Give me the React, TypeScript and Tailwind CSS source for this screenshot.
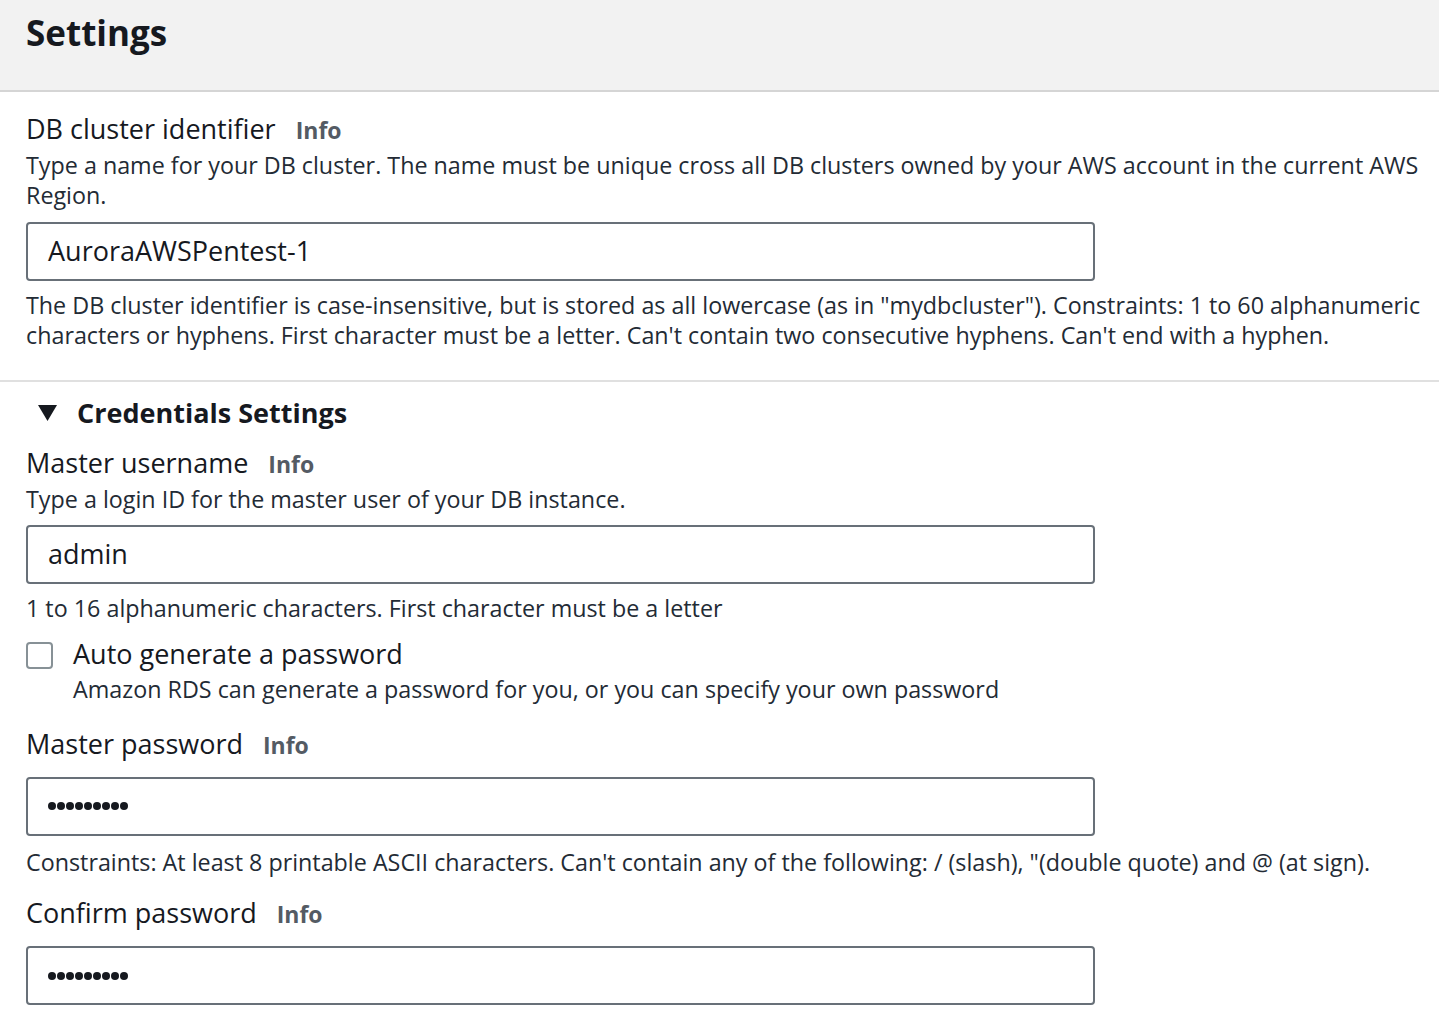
type FieldLabelProps = {
  label: string
}

function FieldLabel({ label }: FieldLabelProps) {
  return (
    <div className="flex items-baseline">
      <span className="text-[27px] leading-[34px] text-[#16191f]">{label}</span>
      <span className="ml-[20px] text-[23px] font-bold text-[#545b64]">Info</span>
    </div>
  )
}

type TextBoxProps = {
  value: string
  password?: boolean
}

function TextBox({ value, password }: TextBoxProps) {
  return (
    <div className="flex h-[59px] w-[1069px] items-center rounded-[4px] border-2 border-[#687078] bg-white px-[20px]">
      {password ? (
        <span className="flex gap-[1px]">
          {value.split('').map((_, i) => (
            <span className="h-[8px] w-[8px] rounded-full bg-[#16191f]" key={i} />
          ))}
        </span>
      ) : (
        <span className="text-[27px] text-[#16191f]">{value}</span>
      )}
    </div>
  )
}

// lines break where the console broke them, so keep them on one row each
const hint = 'whitespace-nowrap text-[23.3px] leading-[30px] text-[#232b35]'

function App() {
  return (
    <main className="min-h-screen overflow-hidden bg-white font-['Open_Sans',sans-serif]">
      <header className="h-[92px] border-b-2 border-[#d5d5d5] bg-[#f2f2f2] px-[26px] pt-[10px]">
        <h1 className="text-[35px] font-bold leading-[46px] text-[#16191f]">Settings</h1>
      </header>

      <section className="border-b-2 border-[#e0e0e0] px-[26px] pb-[30px] pt-[20px]">
        <FieldLabel label="DB cluster identifier" />
        <p className={`${hint} mt-[2px]`}>
          Type a name for your DB cluster. The name must be unique cross all DB clusters owned by your AWS account in the
          current AWS
          <br />
          Region.
        </p>
        <div className="mt-[12px]">
          <TextBox value="AuroraAWSPentest-1" />
        </div>
        <p className={`${hint} mt-[9px]`}>
          The DB cluster identifier is case-insensitive, but is stored as all lowercase (as in "mydbcluster"). Constraints:
          1 to 60 alphanumeric
          <br />
          characters or hyphens. First character must be a letter. Can't contain two consecutive hyphens. Can't end with a
          hyphen.
        </p>
      </section>

      <section className="px-[26px] pt-[14px]">
        <div className="flex items-center">
          <svg className="ml-[12px] mr-[20px]" width="19" height="16" viewBox="0 0 19 16">
            <path d="M0 0 H19 L9.5 16 Z" fill="#16191f" />
          </svg>
          <h2 className="text-[27px] font-bold leading-[34px] text-[#16191f]">Credentials Settings</h2>
        </div>

        <div className="mt-[16px]">
          <FieldLabel label="Master username" />
        </div>
        <p className={`${hint} mt-[3px]`}>Type a login ID for the master user of your DB instance.</p>
        <div className="mt-[11px]">
          <TextBox value="admin" />
        </div>
        <p className={`${hint} mt-[9px]`}>1 to 16 alphanumeric characters. First character must be a letter</p>

        <div className="mt-[18px] flex gap-[20px]">
          <div className="mt-[1px] h-[27px] w-[27px] shrink-0 rounded-[4px] border-2 border-[#879196] bg-white" />
          <div>
            <p className="text-[27px] leading-[26px] text-[#16191f]">Auto generate a password</p>
            <p className={`${hint} mt-[7px]`}>
              Amazon RDS can generate a password for you, or you can specify your own password
            </p>
          </div>
        </div>

        <div className="mt-[23px]">
          <FieldLabel label="Master password" />
        </div>
        <div className="mt-[14px]">
          <TextBox value="password1" password />
        </div>
        <p className={`${hint} mt-[11px]`}>
          Constraints: At least 8 printable ASCII characters. Can't contain any of the following: / (slash), "(double
          quote) and @ (at sign).
        </p>

        <div className="mt-[19px]">
          <FieldLabel label="Confirm password" />
        </div>
        <div className="mt-[15px]">
          <TextBox value="password1" password />
        </div>
      </section>
    </main>
  )
}

export default App
